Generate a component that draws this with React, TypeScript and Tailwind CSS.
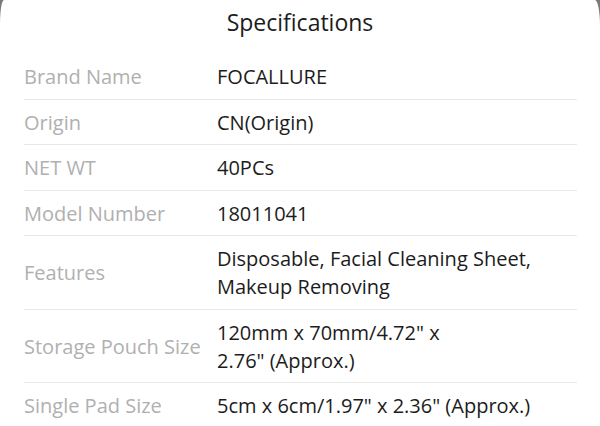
const specs: { label: string; value: string[] }[] = [
  { label: "Brand Name", value: ["FOCALLURE"] },
  { label: "Origin", value: ["CN(Origin)"] },
  { label: "NET WT", value: ["40PCs"] },
  { label: "Model Number", value: ["18011041"] },
  { label: "Features", value: ["Disposable, Facial Cleaning Sheet,", "Makeup Removing"] },
  { label: "Storage Pouch Size", value: ['120mm x 70mm/4.72" x', '2.76" (Approx.)'] },
  { label: "Single Pad Size", value: ['5cm x 6cm/1.97" x 2.36" (Approx.)'] },
];

export default function App() {
  return (
    <div className="h-[426px] w-[600px] overflow-hidden bg-[#7a7a7a] font-['Open_Sans',sans-serif]">
      <div className="h-full bg-white rounded-tl-[4px_24px] rounded-tr-[5px_26px]">
        <div className="h-[54px] pt-[7px] text-center text-[23px] leading-[30px] text-[#1c1c1c]">
          Specifications
        </div>
        <div className="pl-6 pr-[23px]">
          {specs.map((s, i) => (
            <div
              key={s.label}
              className={
                "flex items-center pt-[9px] pb-[7.5px] text-[20px] leading-[28px] " +
                (i < specs.length - 1 ? "border-b border-[#e8e8e8]" : "")
              }
            >
              <div className="w-[193px] shrink-0 text-[#b0b0b0]">{s.label}</div>
              <div className="flex-1 text-[#1c1c1c]">
                {s.value.map((line) => (
                  <div key={line}>{line}</div>
                ))}
              </div>
            </div>
          ))}
        </div>
      </div>
    </div>
  );
}
